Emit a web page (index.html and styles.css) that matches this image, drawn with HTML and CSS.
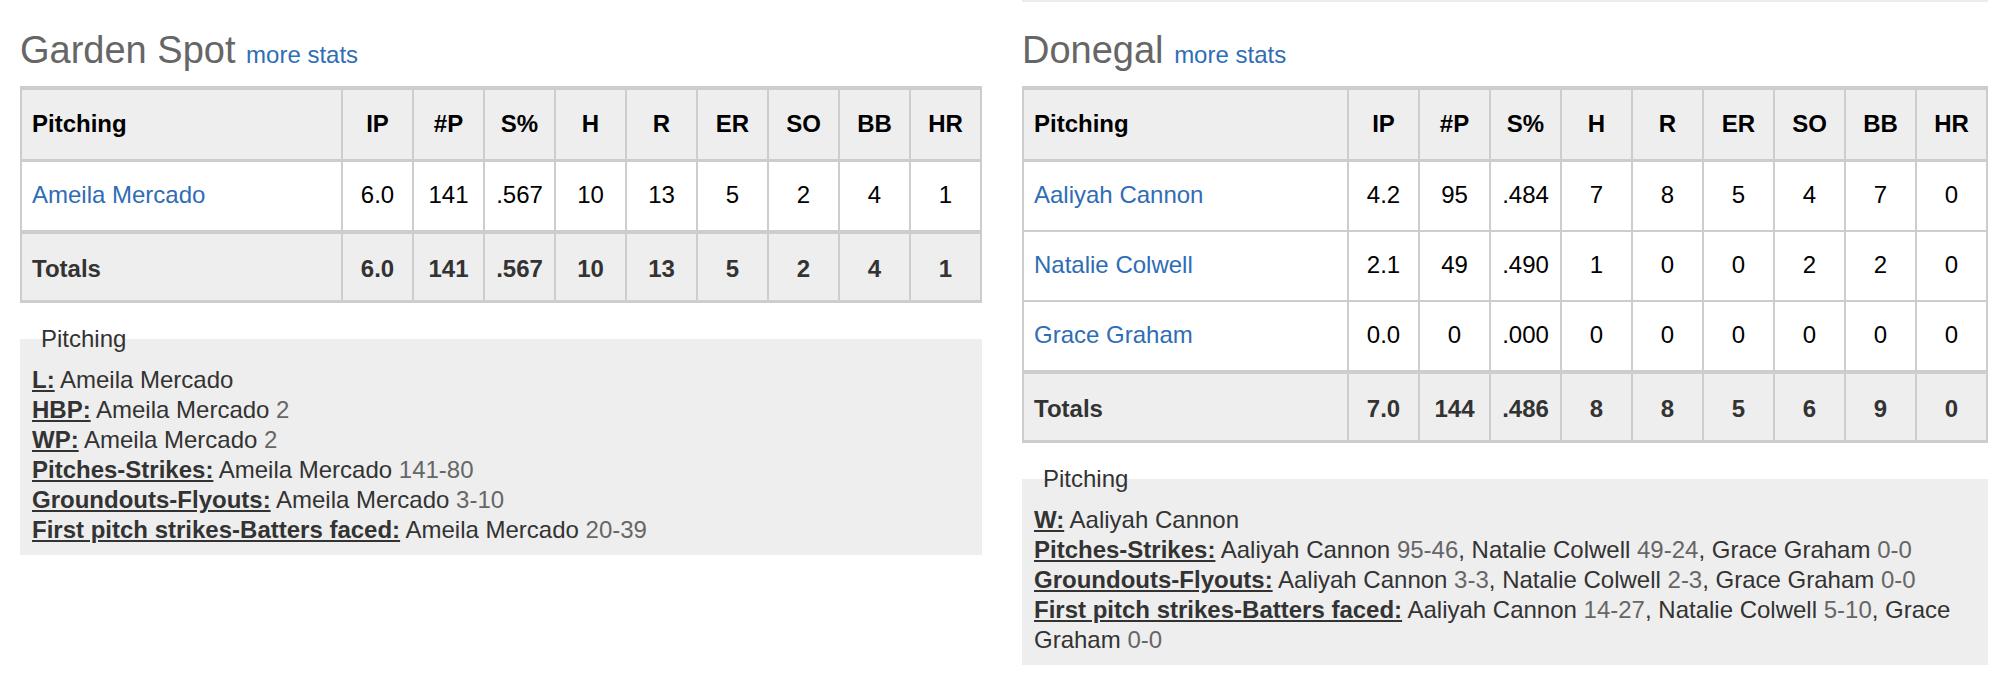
FILE: index.html
```html
<!DOCTYPE html>
<html lang="en">
<head>
    <meta charset="UTF-8">
    <meta name="viewport" content="width=device-width, initial-scale=1.0">
    <title>Box Score - Pitching</title>
    <link rel="stylesheet" href="styles.css">
</head>
<body>
    <div class="boxscore">
        <div class="team-stats">
            <h2 class="team-name">Garden Spot <a href="#" class="more-link">more stats</a></h2>
            <table class="pitching-table">
                <thead>
                    <tr>
                        <th class="name-col">Pitching</th>
                        <th>IP</th>
                        <th>#P</th>
                        <th>S%</th>
                        <th>H</th>
                        <th>R</th>
                        <th>ER</th>
                        <th>SO</th>
                        <th>BB</th>
                        <th>HR</th>
                    </tr>
                </thead>
                <tbody>
                    <tr>
                        <td class="name-col"><a href="#" class="player-link">Ameila Mercado</a></td>
                        <td>6.0</td>
                        <td>141</td>
                        <td>.567</td>
                        <td>10</td>
                        <td>13</td>
                        <td>5</td>
                        <td>2</td>
                        <td>4</td>
                        <td>1</td>
                    </tr>
                </tbody>
                <tfoot>
                    <tr>
                        <td class="name-col">Totals</td>
                        <td>6.0</td>
                        <td>141</td>
                        <td>.567</td>
                        <td>10</td>
                        <td>13</td>
                        <td>5</td>
                        <td>2</td>
                        <td>4</td>
                        <td>1</td>
                    </tr>
                </tfoot>
            </table>
            <fieldset class="notes">
                <legend>Pitching</legend>
                <div class="note"><span class="note-label">L:</span> Ameila Mercado</div>
                <div class="note"><span class="note-label">HBP:</span> Ameila Mercado <span class="note-num">2</span></div>
                <div class="note"><span class="note-label">WP:</span> Ameila Mercado <span class="note-num">2</span></div>
                <div class="note"><span class="note-label">Pitches-Strikes:</span> Ameila Mercado <span class="note-num">141-80</span></div>
                <div class="note"><span class="note-label">Groundouts-Flyouts:</span> Ameila Mercado <span class="note-num">3-10</span></div>
                <div class="note"><span class="note-label">First pitch strikes-Batters faced:</span> Ameila Mercado <span class="note-num">20-39</span></div>
            </fieldset>
        </div>

        <div class="team-stats team-stats-home">
            <h2 class="team-name">Donegal <a href="#" class="more-link">more stats</a></h2>
            <table class="pitching-table">
                <thead>
                    <tr>
                        <th class="name-col">Pitching</th>
                        <th>IP</th>
                        <th>#P</th>
                        <th>S%</th>
                        <th>H</th>
                        <th>R</th>
                        <th>ER</th>
                        <th>SO</th>
                        <th>BB</th>
                        <th>HR</th>
                    </tr>
                </thead>
                <tbody>
                    <tr>
                        <td class="name-col"><a href="#" class="player-link">Aaliyah Cannon</a></td>
                        <td>4.2</td>
                        <td>95</td>
                        <td>.484</td>
                        <td>7</td>
                        <td>8</td>
                        <td>5</td>
                        <td>4</td>
                        <td>7</td>
                        <td>0</td>
                    </tr>
                    <tr>
                        <td class="name-col"><a href="#" class="player-link">Natalie Colwell</a></td>
                        <td>2.1</td>
                        <td>49</td>
                        <td>.490</td>
                        <td>1</td>
                        <td>0</td>
                        <td>0</td>
                        <td>2</td>
                        <td>2</td>
                        <td>0</td>
                    </tr>
                    <tr>
                        <td class="name-col"><a href="#" class="player-link">Grace Graham</a></td>
                        <td>0.0</td>
                        <td>0</td>
                        <td>.000</td>
                        <td>0</td>
                        <td>0</td>
                        <td>0</td>
                        <td>0</td>
                        <td>0</td>
                        <td>0</td>
                    </tr>
                </tbody>
                <tfoot>
                    <tr>
                        <td class="name-col">Totals</td>
                        <td>7.0</td>
                        <td>144</td>
                        <td>.486</td>
                        <td>8</td>
                        <td>8</td>
                        <td>5</td>
                        <td>6</td>
                        <td>9</td>
                        <td>0</td>
                    </tr>
                </tfoot>
            </table>
            <fieldset class="notes">
                <legend>Pitching</legend>
                <div class="note"><span class="note-label">W:</span> Aaliyah Cannon</div>
                <div class="note"><span class="note-label">Pitches-Strikes:</span> Aaliyah Cannon <span class="note-num">95-46</span>, Natalie Colwell <span class="note-num">49-24</span>, Grace Graham <span class="note-num">0-0</span></div>
                <div class="note"><span class="note-label">Groundouts-Flyouts:</span> Aaliyah Cannon <span class="note-num">3-3</span>, Natalie Colwell <span class="note-num">2-3</span>, Grace Graham <span class="note-num">0-0</span></div>
                <div class="note"><span class="note-label">First pitch strikes-Batters faced:</span> Aaliyah Cannon <span class="note-num">14-27</span>, Natalie Colwell <span class="note-num">5-10</span>, Grace Graham <span class="note-num">0-0</span></div>
            </fieldset>
        </div>
    </div>
</body>
</html>
```

FILE: styles.css
```css
body {
    margin: 0;
    font-family: "Liberation Sans", Arial, Helvetica, sans-serif;
    color: #333;
    background-color: #fff;
}
.boxscore {
    display: grid;
    grid-template-columns: 962px 1fr;
    column-gap: 40px;
    padding: 0 20px;
}
.team-stats {
    min-width: 0;
}
.team-stats-home {
    box-shadow: inset 0 2px 0 #ececec;
}
.team-name {
    margin: 28px 0 14px;
    font-size: 38px;
    line-height: 44px;
    font-weight: normal;
    color: #666;
}
.more-link {
    font-size: 24px;
    line-height: 24px;
    color: #2f6db5;
    text-decoration: none;
}
.pitching-table {
    width: 100%;
    table-layout: fixed;
    border-collapse: separate;
    border-spacing: 0;
    border-top: 4px solid #cdcdcd;
    border-left: 2px solid #cdcdcd;
    font-size: 24px;
    line-height: 28px;
    color: #000;
}
.pitching-table th, .pitching-table td {
    box-sizing: border-box;
    width: 71px;
    padding: 19px 0 21px;
    text-align: center;
    border-right: 2px solid #cdcdcd;
    border-bottom: 2px solid #cdcdcd;
    white-space: nowrap;
}
.pitching-table th {
    padding-top: 20px;
    padding-bottom: 21px;
    border-bottom-width: 3px;
    background-color: #eee;
    font-weight: bold;
}
.pitching-table .name-col {
    width: auto;
    padding-left: 10px;
    padding-right: 10px;
    text-align: left;
}
.pitching-table tbody tr:last-child td {
    border-bottom-width: 4px;
}
.pitching-table tfoot td {
    padding-top: 21px;
    padding-bottom: 17px;
    border-bottom-width: 3px;
    background-color: #eee;
    font-weight: bold;
    color: #333;
}
.player-link {
    color: #2f6db5;
    text-decoration: none;
}
.notes {
    min-width: 0;
    margin: 22px 0 0;
    padding: 12px 12px 10px;
    border: 0;
    background-color: #eee;
    font-size: 24px;
    line-height: 30px;
    color: #333;
}
.notes legend {
    padding: 0 0 0 9px;
    line-height: 28px;
}
.note-label {
    font-weight: bold;
    text-decoration: underline;
}
.note-num {
    color: #666;
}
```
